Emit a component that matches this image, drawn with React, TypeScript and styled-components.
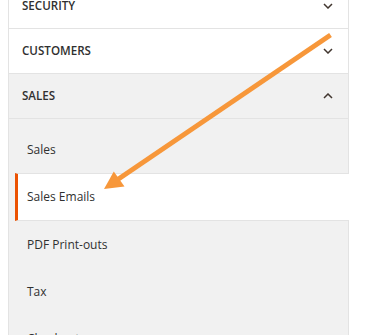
import styled, { createGlobalStyle } from 'styled-components';

const GlobalStyle = createGlobalStyle`
  html, body {
    margin: 0;
    padding: 0;
    background: #ffffff;
    overflow: hidden;
  }
  body {
    font-family: "Open Sans", "Liberation Sans", sans-serif;
    color: #303030;
  }
`;

type Section = { title: string; open?: boolean };

const sections: Section[] = [
  { title: 'Security' },
  { title: 'Customers' },
  { title: 'Sales', open: true },
];

const salesItems = ['Sales', 'Sales Emails', 'PDF Print-outs', 'Tax', 'Checkout'];
const activeItem = 'Sales Emails';

const Chevron = ({ up }: { up?: boolean }) => (
  <ChevronSvg width="10" height="6" viewBox="0 0 10 6" $up={up}>
    <polyline points="1,1 5,5 9,1" fill="none" stroke="#41362f" strokeWidth="1.5" />
  </ChevronSvg>
);

const App = () => {
  return (
    <Page>
      <GlobalStyle />
      <Nav>
        {sections.map((s) => (
          <div key={s.title}>
            <Title $open={s.open}>
              <span>{s.title}</span>
              <Chevron up={s.open} />
            </Title>
            {s.open && (
              <SubList>
                {salesItems.map((item) => (
                  <SubItem key={item} $active={item === activeItem}>
                    {item}
                  </SubItem>
                ))}
              </SubList>
            )}
          </div>
        ))}
      </Nav>
      <Annotation width="372" height="335" viewBox="0 0 372 335">
        <line x1="330.5" y1="35" x2="117" y2="180" stroke="#f7973a" strokeWidth="5" />
        <polygon points="104,189 113.8,171.4 124.5,186.5" fill="#f7973a" />
      </Annotation>
    </Page>
  );
};

export default App;

const Page = styled.div`
  position: relative;
  width: 372px;
  height: 335px;
  overflow: hidden;
`;

const Nav = styled.div`
  margin: -17px 0 0 8px;
  width: 339px;
  border: 1px solid #e3e3e3;
  background: #f1f1f1;
`;

const Title = styled.div<{ $open?: boolean }>`
  display: flex;
  align-items: center;
  justify-content: space-between;
  box-sizing: border-box;
  height: 45px;
  padding: 0 15px 2px 13px;
  background: ${(p) => (p.$open ? '#f1f1f1' : '#ffffff')};
  border-bottom: 1px solid #e3e3e3;
  font-size: 11.6px;
  font-weight: 600;
  text-transform: uppercase;
  color: #303030;

  & > svg {
    margin-top: 2px;
  }
`;

const ChevronSvg = styled.svg<{ $up?: boolean }>`
  display: block;
  transform: ${(p) => (p.$up ? 'rotate(180deg)' : 'none')};
`;

const SubList = styled.div`
  padding-top: 7px;
`;

const SubItem = styled.div<{ $active?: boolean }>`
  display: flex;
  align-items: center;
  box-sizing: border-box;
  height: ${(p) => (p.$active ? '48px' : '47px')};
  padding-bottom: 2px;
  font-size: 12px;
  color: #303030;
  border-top: 1px solid ${(p) => (p.$active ? '#e3e3e3' : 'transparent')};
  border-bottom: ${(p) => (p.$active ? '1px solid #e3e3e3' : 'none')};
  border-left: ${(p) => (p.$active ? '3px solid #eb5202' : 'none')};
  background: ${(p) => (p.$active ? '#ffffff' : 'transparent')};
  margin-left: ${(p) => (p.$active ? '6px' : '0')};
  margin-right: ${(p) => (p.$active ? '-1px' : '0')};
  padding-left: ${(p) => (p.$active ? '9px' : '18px')};
`;

const Annotation = styled.svg`
  position: absolute;
  top: 0;
  left: 0;
  pointer-events: none;
`;
